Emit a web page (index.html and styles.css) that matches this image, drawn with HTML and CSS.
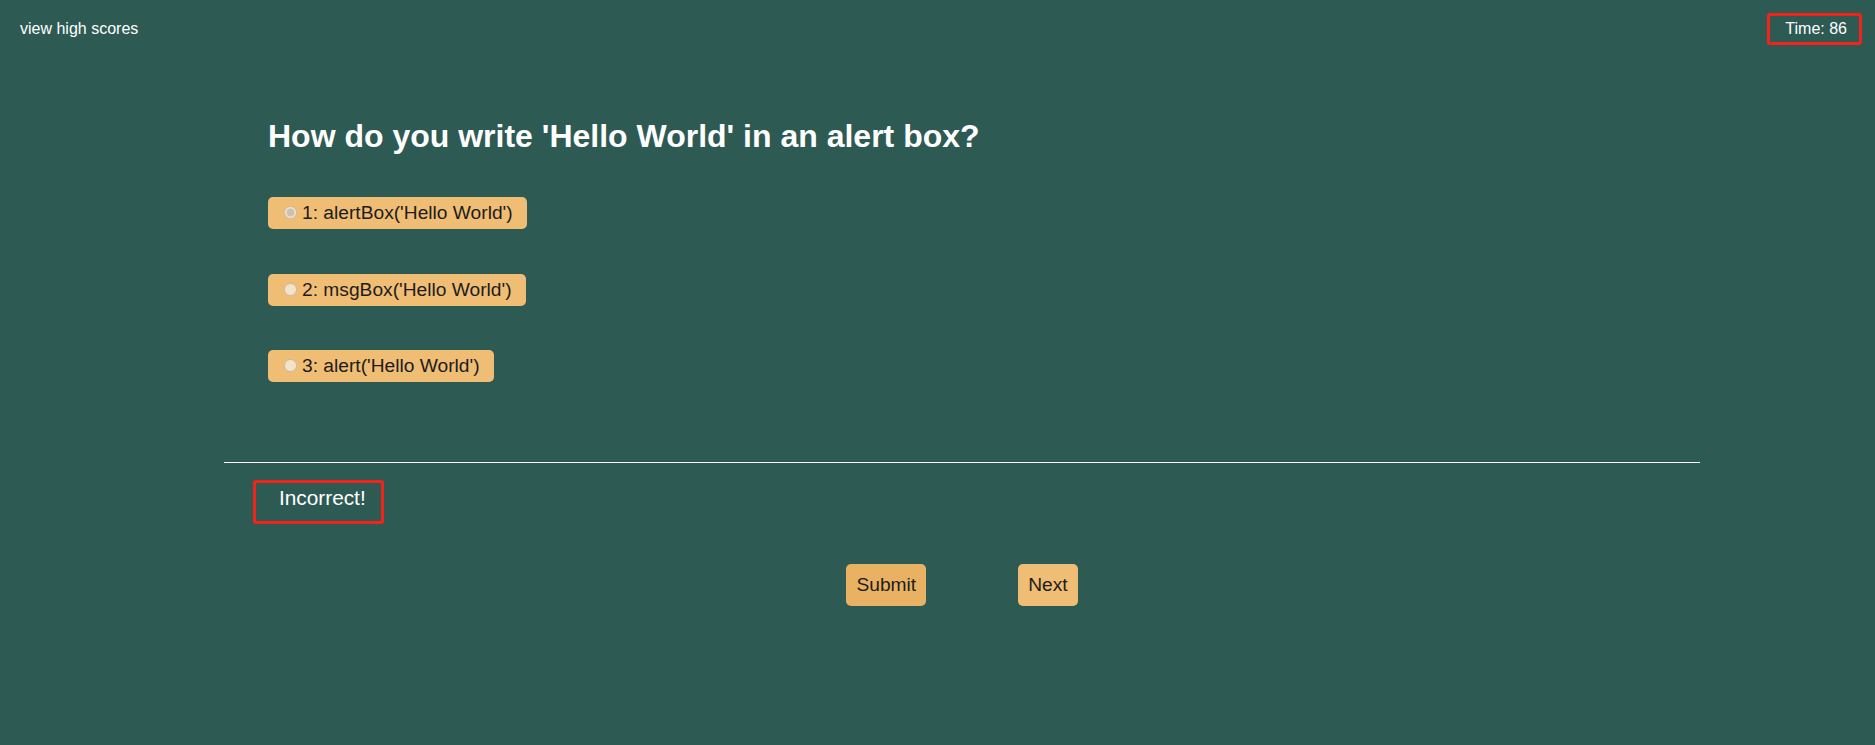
FILE: index.html
```html
<!DOCTYPE html>
<html lang="en">
<head>
<meta charset="utf-8">
<title>Quiz</title>
<link rel="stylesheet" href="styles.css">
</head>
<body>
<header class="topbar">
  <a class="scores-link" href="#">view high scores</a>
  <div class="timer">Time: 86</div>
</header>
<main class="quiz">
  <section class="question">
    <h1 class="question-title">How do you write 'Hello World' in an alert box?</h1>
    <div class="choices">
      <label class="choice"><input type="radio" name="answer" checked disabled>1: alertBox('Hello World')</label>
      <label class="choice"><input type="radio" name="answer" disabled>2: msgBox('Hello World')</label>
      <label class="choice"><input type="radio" name="answer" disabled>3: alert('Hello World')</label>
    </div>
  </section>
  <hr class="divider">
  <div class="feedback">Incorrect!</div>
  <div class="actions">
    <button class="btn btn-submit" type="button">Submit</button>
    <button class="btn btn-next" type="button">Next</button>
  </div>
</main>
</body>
</html>
```
FILE: styles.css
```css
html, body {
  margin: 0;
  padding: 0;
}

body {
  background: #2d5b54;
  color: #ffffff;
  font-family: "Liberation Sans", Arial, sans-serif;
  font-size: 16px;
  min-height: 745px;
}

.topbar {
  display: flex;
  justify-content: space-between;
  align-items: center;
  padding: 13px 13px 0 20px;
}

.scores-link {
  color: #ffffff;
  text-decoration: none;
  font-size: 16px;
}

.timer {
  border: 3px solid #f5221b;
  border-radius: 3px;
  padding: 4px 12px 4px 15px;
  font-size: 16px;
  line-height: 18px;
}

.quiz {
  margin-left: 224px;
  width: 1476px;
}

.question {
  padding-left: 44px;
  padding-top: 73px;
}

.question-title {
  margin: 0;
  font-size: 32px;
  font-weight: bold;
  line-height: 37px;
  color: #ffffff;
}

.choices {
  display: flex;
  flex-direction: column;
  align-items: flex-start;
  gap: 44.5px;
  margin-top: 42px;
}

.choice {
  display: inline-block;
  background: #f0bd74;
  color: #1c1c1c;
  font-size: 19.2px;
  line-height: 22px;
  padding: 5px 14px 5px 11px;
  border-radius: 5px;
}

.choice input {
  margin: 3px 5px 0 5px;
}

.divider {
  border: 0;
  border-top: 1px solid #ffffff;
  margin: 80px 0 0 0;
  height: 0;
}

.feedback {
  display: inline-block;
  margin: 17px 0 0 29px;
  border: 3px solid #f5221b;
  border-radius: 3px;
  padding: 3px 15px 11px 23px;
  font-size: 20.8px;
  line-height: 24px;
  color: #ffffff;
}

.actions {
  display: flex;
  justify-content: center;
  gap: 92px;
  margin-top: 40px;
}

.btn {
  border: 0;
  border-radius: 5px;
  padding: 10px;
  font-family: "Liberation Sans", Arial, sans-serif;
  font-size: 19.2px;
  line-height: 22px;
  color: #1c1c1c;
  cursor: pointer;
}

.btn-submit {
  background: #e9b262;
}

.btn-next {
  background: #f0bd74;
}
```
